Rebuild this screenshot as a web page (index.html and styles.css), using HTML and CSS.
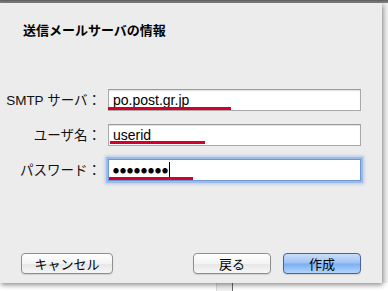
FILE: index.html
```html
<!DOCTYPE html>
<html lang="ja">
<head>
    <meta charset="UTF-8">
    <meta name="viewport" content="width=device-width, initial-scale=1.0">
    <title>送信メールサーバの情報</title>
    <link rel="stylesheet" href="styles.css">
</head>
<body>
    <div class="toolbar-edge"></div>
    <div class="desk">
        <div class="sheet">
            <h1 class="title">送信メールサーバの情報</h1>
            <div class="form">
                <div class="row">
                    <label class="label">SMTP サーバ：</label>
                    <div class="field">
                        <span class="value">po.post.gr.jp</span>
                        <span class="mark mark-smtp"></span>
                    </div>
                </div>
                <div class="row">
                    <label class="label">ユーザ名：</label>
                    <div class="field">
                        <span class="value">userid</span>
                        <span class="mark mark-user"></span>
                    </div>
                </div>
                <div class="row">
                    <label class="label">パスワード：</label>
                    <div class="field focused">
                        <span class="value dots">●●●●●●●●</span>
                        <span class="caret"></span>
                        <span class="mark mark-pass"></span>
                    </div>
                </div>
            </div>
            <div class="buttons">
                <button class="btn btn-cancel">キャンセル</button>
                <div class="spacer"></div>
                <button class="btn btn-back">戻る</button>
                <button class="btn btn-primary">作成</button>
            </div>
        </div>
        <div class="side"></div>
    </div>
    <div class="below">
        <div class="below-col"></div>
    </div>
</body>
</html>
```

FILE: styles.css
```css
body {
    margin: 0;
    width: 388px;
    height: 291px;
    overflow: hidden;
    background-color: #ffffff;
    font-family: "Liberation Sans", "Noto Sans CJK JP", sans-serif;
    font-size: 13px;
    color: #000;
}

.toolbar-edge {
    height: 3px;
    background: linear-gradient(#5e5e5e, #8a8a8a);
}

.desk {
    display: flex;
    height: 280px;
    background-color: #ececec;
}

.sheet {
    width: 382px;
    height: 280px;
    box-sizing: border-box;
    background-color: #ececec;
    box-shadow: 1px 2px 5px rgba(0, 0, 0, 0.45);
    position: relative;
    z-index: 1;
    display: flex;
    flex-direction: column;
}

.side {
    flex: 1;
    background-color: #efefef;
}

.title {
    margin: 17px 0 0 23px;
    font-family: "Noto Sans CJK JP", sans-serif;
    font-size: 13px;
    font-weight: bold;
    line-height: 20px;
}

.form {
    display: flex;
    flex-direction: column;
    gap: 10px;
    margin-top: 47px;
}

.row {
    display: flex;
    align-items: center;
    gap: 7px;
}

.label {
    width: 101px;
    text-align: right;
    line-height: 22px;
    padding-top: 3px;
    font-size: 13.5px;
    color: #111;
}

.field {
    position: relative;
    width: 253px;
    height: 22px;
    box-sizing: border-box;
    border: 1px solid #a9a9a9;
    border-top-color: #9a9a9a;
    background-color: #fff;
    box-shadow: inset 0 1px 1px rgba(0, 0, 0, 0.12);
    display: flex;
    align-items: center;
    padding-left: 4px;
}

.field.focused {
    border-color: #6e96d2;
    box-shadow: 0 0 0 2px #9bbbe9, 0 0 3px 3px rgba(110, 150, 215, 0.45);
}

.value {
    font-size: 14px;
    line-height: 20px;
}

.dots {
    font-family: "Noto Sans CJK JP", sans-serif;
    font-size: 6px;
    letter-spacing: 1px;
    line-height: 20px;
    padding-top: 2px;
}

.caret {
    width: 1px;
    height: 15px;
    background-color: #000;
}

.mark {
    position: absolute;
    left: -1px;
    bottom: 0;
    height: 3px;
    background-color: #d4002a;
}

.mark-smtp {
    width: 123px;
}

.mark-user {
    left: 1px;
    width: 95px;
    bottom: 1px;
}

.mark-pass {
    left: 0;
    width: 84px;
}

.buttons {
    display: flex;
    align-items: center;
    margin-top: 71px;
    padding: 0 21px;
    gap: 12px;
}

.spacer {
    flex: 1;
}

.btn {
    height: 21px;
    box-sizing: border-box;
    border: 1px solid #8e8e8e;
    border-radius: 4px;
    background: linear-gradient(#ffffff, #f3f3f3 50%, #e6e6e6 51%, #f6f6f6);
    font-family: "Noto Sans CJK JP", sans-serif;
    font-size: 13px;
    line-height: 18px;
    padding: 0;
    color: #000;
    box-shadow: 0 1px 1px rgba(0, 0, 0, 0.12);
}

.btn-cancel {
    width: 92px;
}

.btn-back,
.btn-primary {
    width: 78px;
}

.btn-primary {
    border-color: #4f5f98;
    background: linear-gradient(#c9defa, #9ec2f4 48%, #7ab0f0 52%, #b2d5fb);
}

.below {
    height: 8px;
    background-color: #fff;
    display: flex;
}

.below-col {
    margin-left: 216px;
    width: 15px;
    border-left: 1px solid #d8d8d8;
    border-right: 1px solid #6a6a6a;
    background-color: #f0f0f0;
}
```
